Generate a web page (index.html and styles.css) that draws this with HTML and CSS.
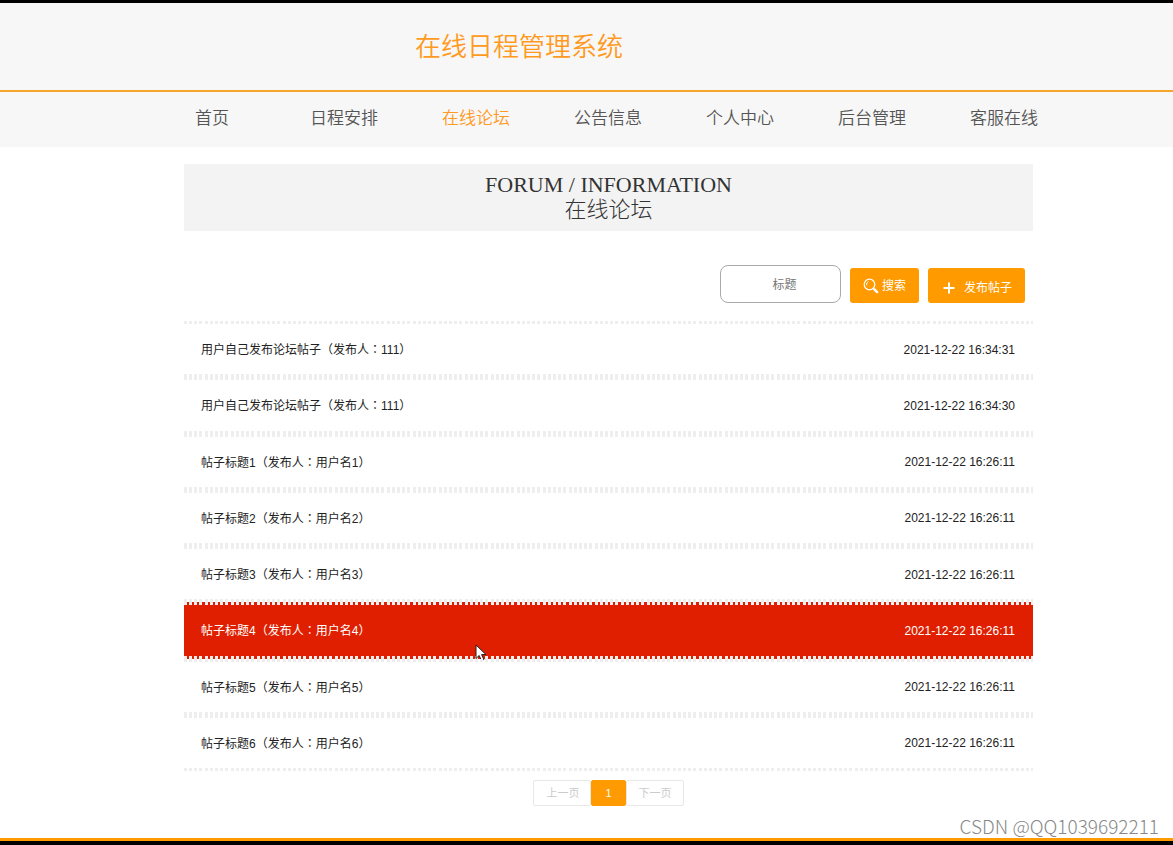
FILE: index.html
```html
<!DOCTYPE html>
<html lang="zh-CN">
<head>
<meta charset="utf-8">
<title>在线日程管理系统</title>
<link rel="stylesheet" href="styles.css">
</head>
<body>
<header class="header"><h1 class="site-title">在线日程管理系统</h1></header>
<nav class="nav">
  <a href="#">首页</a>
  <a href="#">日程安排</a>
  <a href="#" class="active">在线论坛</a>
  <a href="#">公告信息</a>
  <a href="#">个人中心</a>
  <a href="#">后台管理</a>
  <a href="#">客服在线</a>
</nav>
<main class="main">
  <h2 class="banner"><span>FORUM / INFORMATION</span><span>在线论坛</span></h2>
  <form class="search">
    <input class="field" type="text" placeholder="标题" aria-label="标题">
    <button class="btn" type="button">
      <svg class="icon" viewBox="0 0 16 16" fill="none" stroke="currentColor"><circle cx="6.5" cy="6.5" r="5.3" stroke-width="1.2"/><path d="M3.6 7.2a3 3 0 0 1 1.8-3.5" stroke-width="0.9"/><path d="M10.5 10.5l1 1" stroke-width="1.2"/><path d="M11.6 11.6l2.5 2.5" stroke-width="2.6" stroke-linecap="round"/></svg>
      <span>搜索</span>
    </button>
    <button class="btn btn-add" type="button">
      <svg class="icon" viewBox="0 0 16 16" fill="none" stroke="currentColor" stroke-width="2"><path d="M8 2.5v11M2.5 8h11"/></svg>
      <span>发布帖子</span>
    </button>
  </form>
  <ul class="posts">
    <li><a href="#">用户自己发布论坛帖子<i lang="zh-TW">（</i>发布人<i lang="zh-TW">：</i>111<i lang="zh-TW">）</i></a><time>2021-12-22 16:34:31</time></li>
    <li><a href="#">用户自己发布论坛帖子<i lang="zh-TW">（</i>发布人<i lang="zh-TW">：</i>111<i lang="zh-TW">）</i></a><time>2021-12-22 16:34:30</time></li>
    <li><a href="#">帖子标题1<i lang="zh-TW">（</i>发布人<i lang="zh-TW">：</i>用户名1<i lang="zh-TW">）</i></a><time>2021-12-22 16:26:11</time></li>
    <li><a href="#">帖子标题2<i lang="zh-TW">（</i>发布人<i lang="zh-TW">：</i>用户名2<i lang="zh-TW">）</i></a><time>2021-12-22 16:26:11</time></li>
    <li><a href="#">帖子标题3<i lang="zh-TW">（</i>发布人<i lang="zh-TW">：</i>用户名3<i lang="zh-TW">）</i></a><time>2021-12-22 16:26:11</time></li>
    <li class="current"><a href="#">帖子标题4<i lang="zh-TW">（</i>发布人<i lang="zh-TW">：</i>用户名4<i lang="zh-TW">）</i></a><time>2021-12-22 16:26:11</time>
      <svg class="cursor" viewBox="0 0 12 18"><path d="M1 1v13.5l3.2-3 2.2 5 2.4-1-2.2-4.9H11z" fill="#fff" stroke="#222" stroke-width="1"/></svg>
    </li>
    <li><a href="#">帖子标题5<i lang="zh-TW">（</i>发布人<i lang="zh-TW">：</i>用户名5<i lang="zh-TW">）</i></a><time>2021-12-22 16:26:11</time></li>
    <li><a href="#">帖子标题6<i lang="zh-TW">（</i>发布人<i lang="zh-TW">：</i>用户名6<i lang="zh-TW">）</i></a><time>2021-12-22 16:26:11</time></li>
  </ul>
  <div class="pager">
    <button type="button">上一页</button>
    <button type="button" class="page-on">1</button>
    <button type="button">下一页</button>
  </div>
</main>
<footer class="footer"><span class="mark">CSDN @QQ1039692211</span></footer>
</body>
</html>
```
FILE: styles.css
```css
* {
  box-sizing: border-box;
}

body {
  margin: 0;
  min-height: 100vh;
  display: flex;
  flex-direction: column;
  background: #fff;
  color: #222;
  font: 12px/16px "Liberation Sans", "Noto Sans CJK SC", sans-serif;
}

a {
  color: inherit;
  text-decoration: none;
}

.header {
  padding: 27px 135px 26px 0;
  border-top: 3px solid #000;
  border-bottom: 2px solid #f5a52c;
  background: #f7f7f7;
}

.site-title {
  margin: 0;
  color: #ff9a1e;
  font-size: 26px;
  line-height: 34px;
  font-weight: 350;
  text-align: center;
}

.nav {
  display: grid;
  grid-template-columns: repeat(7, 1fr);
  padding: 15px 103px 16px 146px;
  background: #f7f7f7;
  color: #555;
  font-size: 17px;
  line-height: 24px;
  font-weight: 350;
  text-align: center;
}

.nav .active {
  color: #ff9a1e;
}

.main {
  margin: 17px 140px 0 184px;
}

.banner {
  display: flex;
  flex-direction: column;
  align-items: center;
  margin: 0;
  padding: 8px 0 9px;
  background: #f3f3f3;
  color: #333;
  font: 300 22px/25px "Liberation Serif", "Noto Sans CJK SC", serif;
}

.search {
  display: flex;
  justify-content: flex-end;
  align-items: flex-end;
  gap: 9px;
  padding: 34px 8px 18px;
}

.field {
  width: 121px;
  height: 38px;
  border: 1px solid #aaa;
  border-radius: 8px;
  background: #fff;
  font: inherit;
  text-align: center;
  padding: 2px 0 0 8px;
}

.field::placeholder {
  color: #777;
}

.btn {
  display: flex;
  align-items: center;
  gap: 3px;
  height: 35px;
  padding: 1px 13px 0;
  border: 0;
  border-radius: 3px;
  background: #ff9a00;
  color: #fff;
  font: inherit;
}

.btn-add {
  gap: 7px;
  padding: 4px 13px 0;
}

.icon {
  width: 16px;
  height: 16px;
}

.posts {
  display: grid;
  grid-auto-rows: 1fr;
  min-height: 450px;
  margin: 0;
  padding: 0;
  list-style: none;
}

.posts li {
  --dots: repeating-linear-gradient(90deg, #eee 0 3px, transparent 3px 5px, #eee 5px 8px, transparent 8px 10px, #eee 10px 13px, transparent 13px 15px, #eee 15px 18px, transparent 18px 21px, #eee 21px 24px, transparent 24px 26px);
  position: relative;
  display: flex;
  justify-content: space-between;
  align-items: center;
  padding: 1px 18px 0 17px;
  background: var(--dots) top / 100% 3px no-repeat, var(--dots) bottom / 100% 3px no-repeat;
}

.posts i {
  font-family: "Noto Sans CJK TC", sans-serif;
  font-style: normal;
}

.posts .current {
  background-color: #df1f00;
  color: #fff;
}

.cursor {
  position: absolute;
  left: 291px;
  bottom: -3px;
  width: 12px;
  height: 18px;
}

.pager {
  display: flex;
  justify-content: center;
  padding-top: 9px;
}

.pager button {
  height: 26px;
  padding: 0 11px 1px 12px;
  border: 1px solid #e8e8e8;
  border-radius: 2px;
  background: #fff;
  color: #ccc;
  font: 11px/16px "Liberation Sans", "Noto Sans CJK SC", sans-serif;
}

.pager .page-on {
  padding: 0 13px;
  border-color: #ff9a00;
  background: #ff9a00;
  color: #fff;
}

.footer {
  display: flex;
  justify-content: flex-end;
  align-items: flex-end;
  flex: 1;
  padding: 0 14px 1px 0;
  border-bottom: 4px solid #000;
  box-shadow: inset 0 -3px #ff9a00;
}

.mark {
  color: #888;
  font: 300 19px/28px "Noto Sans CJK SC", sans-serif;
}
```
